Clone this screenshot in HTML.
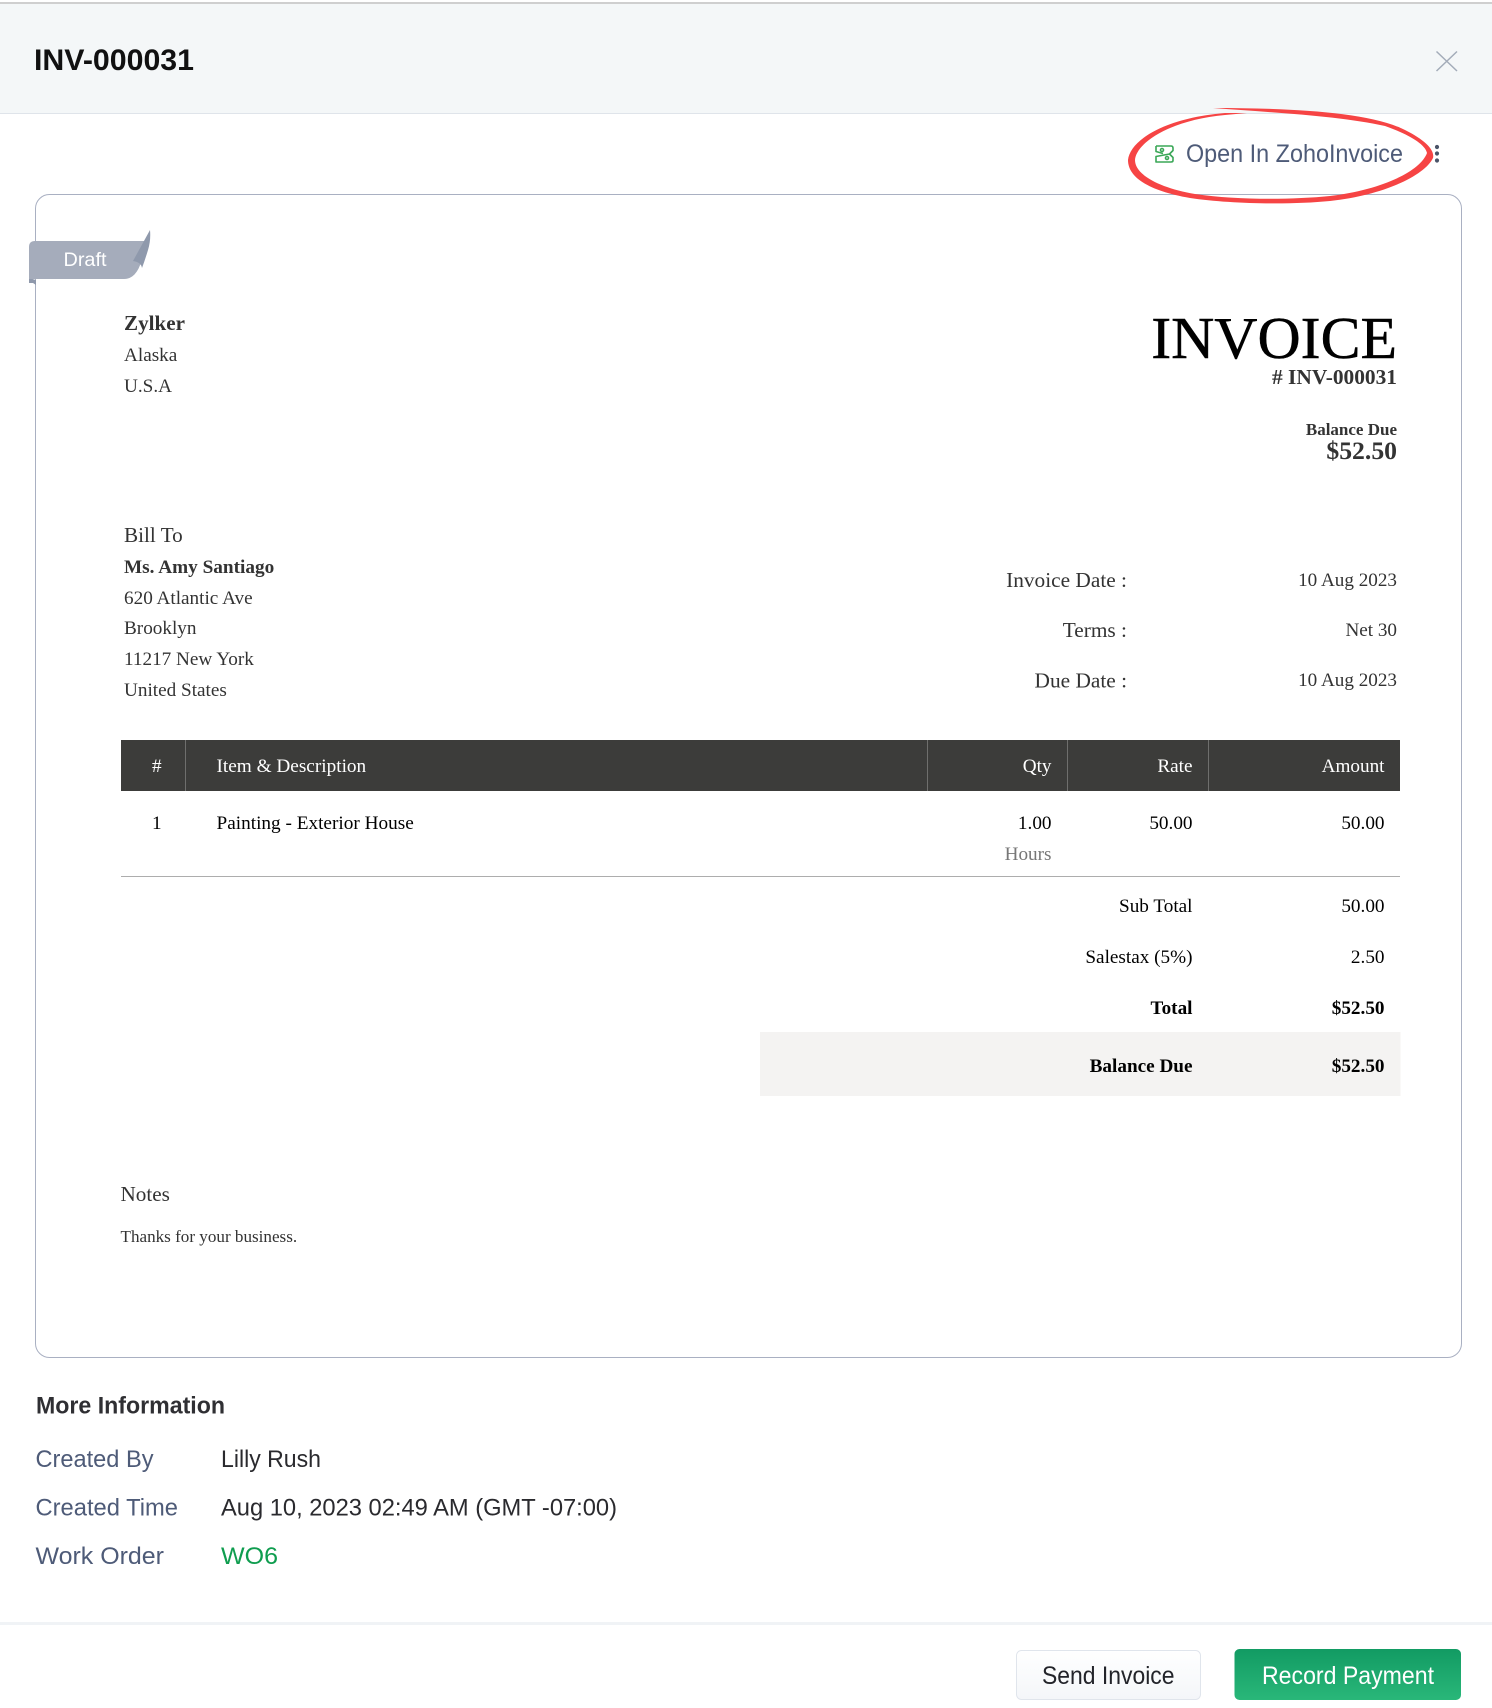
<!DOCTYPE html>
<html lang="en"><head><meta charset="utf-8"><title>INV-000031</title>
<style>
html,body{margin:0;padding:0;background:#fff;width:1492px;height:1708px;overflow:hidden}
svg{display:block}
.s{font-family:"Liberation Serif","Times New Roman",serif;fill:#333}
.k{fill:#000}
.b{font-weight:bold}
.e{text-anchor:end}
.l{font-family:"Liberation Sans",Arial,sans-serif}
</style></head><body>
<svg xmlns="http://www.w3.org/2000/svg" width="1492" height="1708" viewBox="0 0 1492 1708">
<defs>
<linearGradient id="g1" x1="0" y1="0" x2="0" y2="1"><stop offset="0" stop-color="#129b63"/><stop offset="1" stop-color="#29b779"/></linearGradient>
<linearGradient id="g2" x1="0" y1="0" x2="0" y2="1"><stop offset="0" stop-color="#ffffff"/><stop offset="1" stop-color="#f4f6f9"/></linearGradient>
</defs>
<rect width="1492" height="1708" fill="#fff"/>
<rect y="2" width="1492" height="2" fill="#cfcfcf"/>
<rect y="4" width="1492" height="109" fill="#f4f7f8"/>
<rect y="113" width="1492" height="1" fill="#dfe4ea"/>
<text class="l b" x="34" y="70" font-size="30" fill="#111" textLength="160" lengthAdjust="spacingAndGlyphs">INV-000031</text>
<path d="M1436.500 51.500L1457 71M1457 51.500L1436.500 71" stroke="#a3acb9" stroke-width="1.500" fill="none"/>

<rect x="35.500" y="194.500" width="1426" height="1163" rx="14" fill="#fff" stroke="#a9b0c2" stroke-width="1"/>

<path d="M1213,108 C1290,108 1370,112 1405,130 C1425,140 1435,150 1433,158 C1425,175 1385,195 1330,201 C1290,205 1230,204 1190,198 C1150,191 1128,178 1128,160 C1130,140 1165,118 1225,113 L1247,113 L1225,115 C1170,120 1136,143 1135,160 C1135,175 1160,188 1195,194 C1235,200 1290,200 1330,196 C1380,190 1420,172 1427,153 C1425,143 1405,133 1385,126 C1340,116 1280,113 1213,108 Z" fill="#f64444"/>
<g fill="none" stroke="#3aa757" stroke-width="1.600" stroke-linejoin="round">
<path d="M1156,146H1171Q1173,146 1173,148V150.500L1169.500,154L1173,157.500V160.500Q1173,162 1171,162H1156V156.500L1169.500,154M1156,146V151.500L1163,153.500" />
<circle cx="1162" cy="150" r="1.500"/><circle cx="1167" cy="158" r="1.500"/>
</g>
<text class="l" x="1186" y="162" font-size="25" fill="#4e5b78" textLength="217" lengthAdjust="spacingAndGlyphs">Open In ZohoInvoice</text>
<g fill="#4a5468"><circle cx="1437" cy="147" r="2.100"/><circle cx="1437" cy="153.500" r="2.100"/><circle cx="1437" cy="160.500" r="2.100"/></g>

<path d="M29,278 L36,280 L36,285 L33,283 L29,283Z" fill="#8f99ac"/>
<path d="M29,247 Q29,241 35,241 L146,241 L143,255 Q138,279 124,279 L29,279Z" fill="#a5acbb"/>
<path d="M150,230 Q151,240 148,250 Q145,260 142,268 Q141,262 133,261Z" fill="#8f99ac"/>
<text class="l" x="63.500" y="266" font-size="19.500" fill="#fff" textLength="43" lengthAdjust="spacingAndGlyphs">Draft</text>

<text class="s b" x="124" y="330" font-size="21.100">Zylker</text>
<text class="s" x="124" y="361" font-size="19.200">Alaska</text>
<text class="s" x="124" y="392" font-size="19.200">U.S.A</text>

<text class="s k e" x="1397" y="358" font-size="59.800" stroke="#000" stroke-width=".5">INVOICE</text>
<text class="s b e" x="1397" y="384" font-size="21.400">#&#160;INV-000031</text>
<text class="s b e" x="1397" y="435" font-size="17">Balance Due</text>
<text class="s b e" x="1397" y="459" font-size="25.700">$52.50</text>

<text class="s" x="124" y="542" font-size="21.200">Bill To</text>
<text class="s b" x="124" y="573" font-size="19.250">Ms. Amy Santiago</text>
<text class="s" x="124" y="604" font-size="19.200">620 Atlantic Ave</text>
<text class="s" x="124" y="634" font-size="19.200">Brooklyn</text>
<text class="s" x="124" y="665" font-size="19.200">11217 New York</text>
<text class="s" x="124" y="696" font-size="19.200">United States</text>

<text class="s e" x="1127" y="587" font-size="21.350">Invoice Date :</text>
<text class="s e" x="1127" y="637" font-size="21.350">Terms :</text>
<text class="s e" x="1127" y="687.500" font-size="21.350">Due Date :</text>
<text class="s e" x="1397" y="586" font-size="19.150">10 Aug 2023</text>
<text class="s e" x="1397" y="636" font-size="19.150">Net 30</text>
<text class="s e" x="1397" y="686" font-size="19.150">10 Aug 2023</text>

<rect x="121" y="740" width="1279" height="51" fill="#3c3c3a"/>
<g fill="#6f6f6d"><rect x="185" y="740" width="1" height="51"/><rect x="927" y="740" width="1" height="51"/><rect x="1067" y="740" width="1" height="51"/><rect x="1208" y="740" width="1" height="51"/></g>
<text class="s" style="fill:#fff" x="152" y="772" font-size="19.200">#</text>
<text class="s" style="fill:#fff" x="216.500" y="772" font-size="19.250">Item &amp; Description</text>
<text class="s e" style="fill:#fff" x="1051.500" y="772" font-size="19.200">Qty</text>
<text class="s e" style="fill:#fff" x="1192.500" y="772" font-size="19.200">Rate</text>
<text class="s e" style="fill:#fff" x="1384.500" y="772" font-size="19.200">Amount</text>
<text class="s k" x="152" y="829" font-size="19.200">1</text>
<text class="s k" x="216.500" y="829" font-size="19.250">Painting - Exterior House</text>
<text class="s k e" x="1051.500" y="829" font-size="19.200">1.00</text>
<text class="s e" style="fill:#777" x="1051.500" y="860" font-size="19.200">Hours</text>
<text class="s k e" x="1192.500" y="829" font-size="19.200">50.00</text>
<text class="s k e" x="1384.500" y="829" font-size="19.200">50.00</text>
<rect x="121" y="876" width="1279" height="1" fill="#adadad"/>

<text class="s k e" x="1192.500" y="912" font-size="19.200">Sub Total</text>
<text class="s k e" x="1384.500" y="912" font-size="19.200">50.00</text>
<text class="s k e" x="1192.500" y="963" font-size="19.200">Salestax (5%)</text>
<text class="s k e" x="1384.500" y="963" font-size="19.200">2.50</text>
<text class="s k b e" x="1192.500" y="1014" font-size="19.200">Total</text>
<text class="s k b e" x="1384.500" y="1014" font-size="19.200">$52.50</text>
<rect x="760" y="1032" width="640.500" height="64" fill="#f4f3f2"/>
<text class="s k b e" x="1192.500" y="1072" font-size="19.200">Balance Due</text>
<text class="s k b e" x="1384.500" y="1072" font-size="19.200">$52.50</text>

<text class="s" x="120.500" y="1201" font-size="21.200">Notes</text>
<text class="s" x="120.500" y="1242" font-size="17.100">Thanks for your business.</text>

<text class="l b" x="36" y="1413.500" font-size="24" fill="#2f2f33" textLength="189" lengthAdjust="spacingAndGlyphs">More Information</text>
<text class="l" x="35.500" y="1467" font-size="24.500" fill="#4e5b78" textLength="118" lengthAdjust="spacingAndGlyphs">Created By</text>
<text class="l" x="35.500" y="1515.500" font-size="24.500" fill="#4e5b78" textLength="142.500" lengthAdjust="spacingAndGlyphs">Created Time</text>
<text class="l" x="35.500" y="1564" font-size="24.500" fill="#4e5b78" textLength="128.500" lengthAdjust="spacingAndGlyphs">Work Order</text>
<text class="l" x="221" y="1467" font-size="24.500" fill="#2a2a2e" textLength="100" lengthAdjust="spacingAndGlyphs">Lilly Rush</text>
<text class="l" x="221" y="1515.500" font-size="24.500" fill="#2a2a2e" textLength="396" lengthAdjust="spacingAndGlyphs">Aug 10, 2023 02:49 AM (GMT -07:00)</text>
<text class="l" x="221" y="1564" font-size="24.500" fill="#0f9d4f" textLength="57" lengthAdjust="spacingAndGlyphs">WO6</text>

<rect y="1622" width="1492" height="3" fill="#f0f3f6"/>
<rect x="1016.500" y="1650.500" width="184" height="49" rx="5" fill="url(#g2)" stroke="#e0e5ec"/>
<text class="l" x="1042" y="1684" font-size="25" fill="#23242a" textLength="132.500" lengthAdjust="spacingAndGlyphs">Send Invoice</text>
<rect x="1234.500" y="1649" width="226.500" height="51" rx="5" fill="url(#g1)"/>
<text class="l" x="1262" y="1684" font-size="25" fill="#fff" textLength="172" lengthAdjust="spacingAndGlyphs">Record Payment</text>
</svg>
</body></html>
